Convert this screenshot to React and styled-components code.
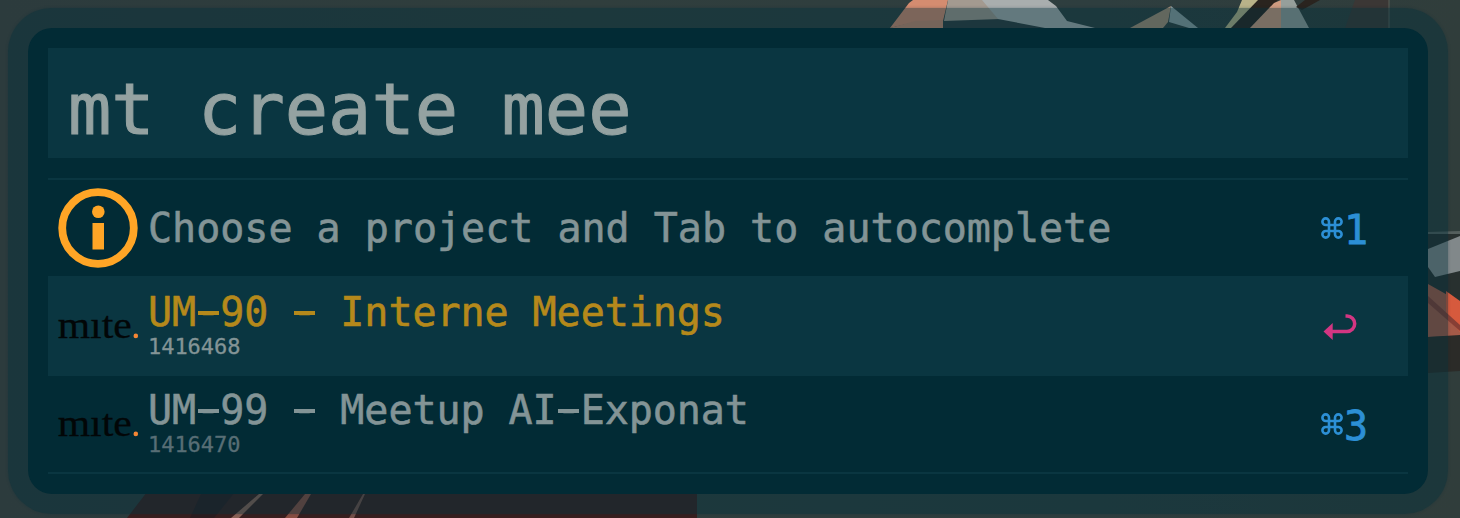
import React from "react";
import styled, { createGlobalStyle } from "styled-components";

const GlobalStyle = createGlobalStyle`
  * { box-sizing: border-box; }
  html, body { margin: 0; padding: 0; overflow: hidden; }
  body { background: #2f3e3e; }
`;

const Desktop = styled.main`
  position: relative;
  width: 1460px;
  height: 518px;
  overflow: hidden;
  padding: 8px 12px 4px 8px;
  background: linear-gradient(90deg, #2c3b3d, #303e3d 40%, #2e3e3f 75%, #303d3b);
  font-family: "DejaVu Sans Mono", monospace;
`;

const Wallpaper = styled.svg`
  position: absolute;
  inset: 0;
  width: 1460px;
  height: 518px;
`;

const Halo = styled.div`
  position: relative;
  width: 1440px;
  height: 506px;
  padding: 20px;
  border-radius: 44px;
  background: rgba(3, 48, 60, 0.42);
  box-shadow: 0 0 3px rgba(3, 48, 60, 0.3);
`;

const Panel = styled.section`
  display: flex;
  flex-direction: column;
  height: 466px;
  padding: 20px;
  border-radius: 24px;
  background: #022b35;
`;

const Query = styled.div`
  height: 110px;
  margin-bottom: 20px;
  padding: 6px 0 0 20px;
  background: #0a3641;
  color: #94a2a1;
  font-size: 72px;
  line-height: 110px;
  white-space: pre;
  -webkit-text-stroke: 1px #94a2a1;
`;

const Results = styled.div`
  border-top: 2px solid #0a3641;
  border-bottom: 2px solid #0a3641;
`;

const Row = styled.div`
  display: flex;
  align-items: center;
  height: ${(p) => (p.$selected ? 100 : 96)}px;
  padding: 0 10px;
  background: ${(p) => (p.$selected ? "#0a3641" : "transparent")};
`;

const Icon = styled.svg`
  flex: none;
  width: 80px;
  height: 80px;
  overflow: visible;
`;

const Labels = styled.div`
  flex: 1;
  display: flex;
  flex-direction: column;
  padding-left: 10px;
  padding-bottom: ${(p) => (p.$double ? 4 : 0)}px;
  letter-spacing: ${(p) => (p.$double ? "-0.05px" : "normal")};
  white-space: pre;
`;

const Title = styled.div`
  font-size: 40px;
  line-height: 46px;
  color: ${(p) => (p.$selected ? "#b5891b" : "#839496")};
  -webkit-text-stroke: 0.6px currentColor;
`;

const Subtitle = styled.div`
  font-size: 22px;
  line-height: 24px;
  color: ${(p) => (p.$selected ? "#839496" : "#586e75")};
  -webkit-text-stroke: 0.3px currentColor;
`;

const Hyphen = styled.span`
  position: relative;
  top: -1px;

  &::after {
    content: "";
    position: absolute;
    left: 1.5px;
    right: 1.5px;
    bottom: 19px;
    height: 4px;
    background: currentColor;
  }
`;

const Shortcut = styled.div`
  flex: none;
  display: flex;
  align-items: center;
  width: 79px;
  color: #2c8fd5;
  font-size: 40px;
  line-height: 48px;
  padding-top: 4px;
  -webkit-text-stroke: 0.8px currentColor;
`;

const Symbol = styled.svg`
  width: 24px;
  height: 24px;
  margin: 0 1px 3px 0;
  overflow: visible;
`;

function InfoIcon() {
  return (
    <Icon viewBox="0 0 80 80">
      <circle cx="40" cy="40" r="35.8" fill="none" stroke="#ffa526" strokeWidth="7.8" />
      <circle cx="40.3" cy="23.7" r="6.3" fill="#ffa526" />
      <rect x="34.5" y="35" width="11.5" height="26.5" fill="#ffa526" />
    </Icon>
  );
}

function MiteIcon() {
  return (
    <Icon viewBox="0 0 80 80">
      <text x="-0.3" y="51.8" fontFamily="Liberation Serif, serif" fontSize="38" textLength="74" lengthAdjust="spacingAndGlyphs" fill="#020607" stroke="#020607" strokeWidth="0.3">mıte</text>
      <circle cx="77.8" cy="49.9" r="2.3" fill="#f58634" />
    </Icon>
  );
}

function CommandKey({ digit }) {
  return (
    <Shortcut>
      <Symbol viewBox="-2 0 24 24" fill="none" stroke="#2c8fd5" strokeWidth="2.6">
        <path d="M8 8V4.7A3.3 3.3 0 1 0 4.7 8H17.3A3.3 3.3 0 1 0 14 4.7V17.3A3.3 3.3 0 1 0 17.3 14H4.7A3.3 3.3 0 1 0 8 17.3Z" />
      </Symbol>
      {digit}
    </Shortcut>
  );
}

function ReturnKey() {
  return (
    <Shortcut>
      <Symbol viewBox="0 0 24 24">
        <path d="M26.5 1H28A7.7 7.7 0 0 1 28 16.4H12" fill="none" stroke="#d33682" strokeWidth="3.5" />
        <path d="M4.5 16.4L13.7 7.9V24.9Z" fill="#d33682" />
      </Symbol>
    </Shortcut>
  );
}

function renderHyphens(text) {
  return text.split(/(-)/).map((part, i) => (part === "-" ? <Hyphen key={i}>-</Hyphen> : part));
}

const items = [
  { icon: <InfoIcon />, title: "Choose a project and Tab to autocomplete", action: <CommandKey digit="1" /> },
  { icon: <MiteIcon />, title: "UM-90 - Interne Meetings", subtitle: "1416468", selected: true, action: <ReturnKey /> },
  { icon: <MiteIcon />, title: "UM-99 - Meetup AI-Exponat", subtitle: "1416470", action: <CommandKey digit="3" /> },
];

function Background() {
  return (
    <Wallpaper viewBox="0 0 1460 518">
      <path d="M943 28L945 20L998 19L1045 28Z" fill="#2f3c3f" />
      <path d="M890 28L909 3L913 0H948L943 21L915 22Z" fill="#d48c70" />
      <path d="M890 28L915 21L943 20V28Z" fill="#c98a71" />
      <path d="M948 0H984L1000 19L944 21Z" fill="#a39a90" />
      <path d="M982 0H1048L1056 6L1067 21L1095 28H1045L998 19Z" fill="#a9aeae" />
      <path d="M1130 28L1171 6L1168 22L1163 28Z" fill="#a88f78" />
      <path d="M1171 6L1198 28H1189L1169 22Z" fill="#8fa0a3" />
      <path d="M1225 28L1237 12L1242 0H1262L1234 28Z" fill="#b9b389" />
      <path d="M1231 28L1258 0H1278L1250 28Z" fill="#2a241f" />
      <path d="M1250 28L1274 3L1281 0V28Z" fill="#cf9b80" />
      <path d="M1281 0H1294L1309 28H1281Z" fill="#969f9b" />
      <path d="M1296 7L1305 0H1320L1302 10Z" fill="#2a241f" />
      <path d="M1355 0H1389V28H1345Z" fill="#3b3735" />
      <path d="M1389 0V28" stroke="#5b6059" />
      <path d="M1428 232L1460 231V234L1428 234Z" fill="#555f5d" />
      <path d="M1428 234H1460V337H1428Z" fill="#28302f" />
      <path d="M1428 249L1460 236V271L1435 277L1428 267Z" fill="#81888a" />
      <path d="M1428 284L1460 302V336L1428 337Z" fill="#a55a48" />
      <path d="M1446 291L1460 301V332L1446 316Z" fill="#d65a3d" />
      <path d="M1428 296L1460 325V331L1428 303Z" fill="#873f35" />
      <path d="M1428 337L1460 335V371L1428 373Z" fill="#2b2b28" />
      <path d="M127 518L147 492H697V518Z" fill="#391f1f" />
      <path d="M190 518L202 492H235L214 518Z" fill="#2c1c1f" />
      <path d="M231 518L259 494H263L239 518Z" fill="#8c6257" />
      <path d="M285 518L305 494H311L297 518Z" fill="#8a4e42" />
      <path d="M349 518L363 494H365L354 518Z" fill="#765049" />
    </Wallpaper>
  );
}

export default function App() {
  return (
    <Desktop>
      <GlobalStyle />
      <Background />
      <Halo>
        <Panel>
          <Query>mt create mee</Query>
          <Results>
            {items.map((item) => (
              <Row key={item.title} $selected={item.selected}>
                {item.icon}
                <Labels $double={Boolean(item.subtitle)}>
                  <Title $selected={item.selected}>{renderHyphens(item.title)}</Title>
                  {item.subtitle && <Subtitle $selected={item.selected}>{item.subtitle}</Subtitle>}
                </Labels>
                {item.action}
              </Row>
            ))}
          </Results>
        </Panel>
      </Halo>
    </Desktop>
  );
}
